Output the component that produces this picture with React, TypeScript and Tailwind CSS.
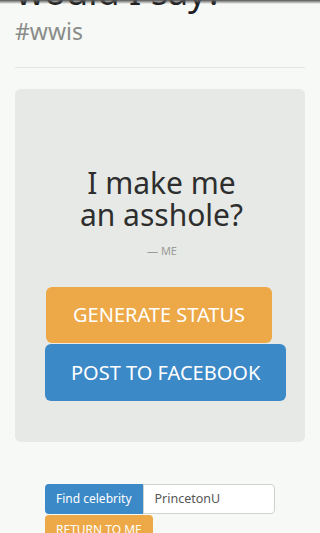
import React from "react";

export default function App() {
  return (
    <div className="relative min-h-[533px] overflow-hidden bg-[#f6f9f5] px-[15px] font-['Noto_Sans','Open_Sans',sans-serif]">
      <div className="pointer-events-none absolute inset-x-0 top-0 h-[4px] bg-gradient-to-b from-[#555] to-transparent" />
      <h1 className="mt-[-26px] pl-[1px] text-[36px] leading-[36px] text-[#1e1e1e]">would I say?</h1>
      <h2 className="mt-[9px] text-[23px] leading-[24px] text-[#8a8c89]">#wwis</h2>
      <hr className="mt-[24px] border-t border-[#e2e6e1]" />
      <div className="mt-[21px] h-[353px] rounded-[6px] bg-[#e6e9e5] px-[30px] pt-[78px]">
        <p className="pl-[3px] text-center text-[30px] leading-[32px] text-[#2e2e2e]">
          I make me
          <br />
          an asshole?
        </p>
        <p className="mt-[12px] pl-[4px] text-center text-[11px] leading-[16px] text-[#9a9c99]">— ME</p>
        <div className="mt-[28px] flex flex-col items-start gap-[1px]">
          <button className="ml-[1px] flex h-[56px] shrink-0 items-center whitespace-nowrap rounded-[6px] bg-[#eda947] px-[27px] text-[20px] text-white">
            GENERATE STATUS
          </button>
          <button className="flex h-[57px] shrink-0 items-center whitespace-nowrap rounded-[6px] bg-[#3c89c7] px-[26px] text-[20px] text-white">
            POST TO FACEBOOK
          </button>
        </div>
      </div>
      <div className="mt-[42px] pl-[30px]">
        <div className="flex h-[30px] w-[230px]">
          <span className="flex items-center whitespace-nowrap rounded-l-[4px] bg-[#3c89c7] px-[11px] text-[12px] text-white">
            Find celebrity
          </span>
          <div className="flex flex-1 items-center rounded-r-[4px] border border-[#cfd2ce] bg-white px-[11px] text-[12.5px] text-[#555]">
            PrincetonU
          </div>
        </div>
        <button className="mt-[1px] flex h-[30px] items-center whitespace-nowrap rounded-[4px] bg-[#eda947] px-[11px] text-[12px] text-white">
          RETURN TO ME
        </button>
      </div>
    </div>
  );
}
